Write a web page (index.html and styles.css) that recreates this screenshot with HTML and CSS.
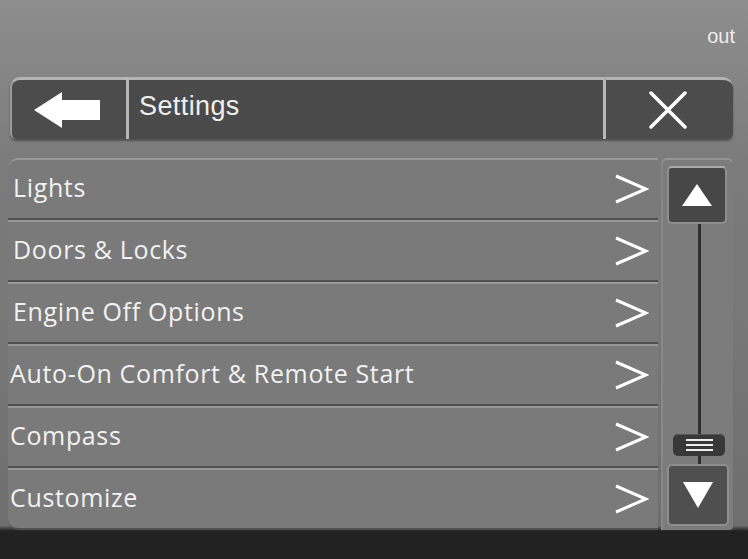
FILE: index.html
```html
<!DOCTYPE html>
<html>
<head>
<meta charset="utf-8">
<link rel="stylesheet" href="styles.css">
</head>
<body>
<div class="screen">
  <div class="status"><span class="out">out</span></div>
  <div class="header">
    <div class="hbtn back">
      <svg width="68" height="36" viewBox="0 0 68 36"><polygon points="0,18 28,0 28,8 66,8 66,28 28,28 28,36" fill="#fff"/></svg>
    </div>
    <div class="title">Settings</div>
    <div class="hbtn close">
      <svg width="38" height="38" viewBox="0 0 38 38"><path d="M2 2 L36 36 M36 2 L2 36" stroke="#fff" stroke-width="3.5" stroke-linecap="round"/></svg>
    </div>
  </div>
  <div class="main">
    <div class="list">
      <div class="row first"><span>Lights</span><svg class="chev" width="36" height="32" viewBox="0 0 36 32"><path d="M3 3 L33 16 L3 29" fill="none" stroke="#fff" stroke-width="3"/></svg></div>
      <div class="row"><span class="in">Doors &amp; Locks</span><svg class="chev" width="36" height="32" viewBox="0 0 36 32"><path d="M3 3 L33 16 L3 29" fill="none" stroke="#fff" stroke-width="3"/></svg></div>
      <div class="row"><span class="in">Engine Off Options</span><svg class="chev" width="36" height="32" viewBox="0 0 36 32"><path d="M3 3 L33 16 L3 29" fill="none" stroke="#fff" stroke-width="3"/></svg></div>
      <div class="row"><span>Auto-On Comfort &amp; Remote Start</span><svg class="chev" width="36" height="32" viewBox="0 0 36 32"><path d="M3 3 L33 16 L3 29" fill="none" stroke="#fff" stroke-width="3"/></svg></div>
      <div class="row"><span>Compass</span><svg class="chev" width="36" height="32" viewBox="0 0 36 32"><path d="M3 3 L33 16 L3 29" fill="none" stroke="#fff" stroke-width="3"/></svg></div>
      <div class="row last"><span>Customize</span><svg class="chev" width="36" height="32" viewBox="0 0 36 32"><path d="M3 3 L33 16 L3 29" fill="none" stroke="#fff" stroke-width="3"/></svg></div>
    </div>
    <div class="scroll">
      <div class="sbtn up"><svg width="30" height="22" viewBox="0 0 30 22"><polygon points="15,0 30,22 0,22" fill="#fff"/></svg></div>
      <div class="track"><div class="line"></div></div>
      <div class="thumb"><i></i><i></i><i></i></div>
      <div class="line short"></div>
      <div class="sbtn down"><svg width="30" height="26" viewBox="0 0 30 26"><polygon points="0,0 30,0 15,26" fill="#fff"/></svg></div>
    </div>
  </div>
  <div class="bottom"></div>
</div>
</body>
</html>
```
FILE: styles.css
```css
html, body { margin: 0; padding: 0; }
body { background: #222; }
.screen {
  width: 748px; height: 559px; overflow: hidden;
  display: flex; flex-direction: column;
  background: linear-gradient(180deg, #8d8d8d 0%, #848484 15%, #7b7b7b 30%, #777 60%, #6e6e6e 94%, #222 95%);
  font-family: "Open Sans", "Liberation Sans", sans-serif;
  color: #f2f2f2;
}
.status { height: 77px; display: flex; justify-content: flex-end; align-items: flex-start; }
.out { font-family: "Liberation Sans", sans-serif; font-size: 20px; color: #eee; margin: 25px 13px 0 0; }
.header { display: flex; height: 62px; margin: 0 15px 0 10px; box-shadow: 0 2px 2px rgba(40,40,40,0.5); border-radius: 10px 10px 6px 6px; }
.hbtn { background: #4c4c4c; display: flex; align-items: center; justify-content: center; border-top: 3px solid #b4b4b4; }
.back { width: 116px; border-left: 2px solid #9a9a9a; border-radius: 10px 0 0 6px; padding-right: 2px; box-sizing: border-box; }
.title {
  flex: 1; background: #4a4a4a; border-top: 3px solid #b4b4b4; border-left: 3px solid #b8b8b8;
  font-family: "Liberation Sans", sans-serif; font-size: 27px; letter-spacing: 0.4px; color: #eee;
  display: flex; align-items: center; padding: 0 0 7px 10px;
}
.close { width: 130px; border-left: 3px solid #b8b8b8; border-radius: 0 10px 6px 0; box-sizing: border-box; padding-right: 4px; }
.main { display: flex; height: 372px; margin: 19px 15px 0 8px; }
.list { width: 650px; display: flex; flex-direction: column; }
.row {
  height: 62px; box-sizing: border-box; background: #7a7a7a;
  border-top: 2px solid #989898; border-bottom: 2px solid #505050;
  display: flex; align-items: center; justify-content: space-between;
  padding: 0 9px 5px 2px; font-size: 25px; letter-spacing: 0.65px;
}
.row .in { padding-left: 3px; }
.row.first { border-radius: 10px 0 0 0; padding-left: 5px; }
.row.last { border-radius: 0 0 0 10px; }
.row .chev { margin-top: 5px; }
.scroll {
  flex: 1; margin-left: 3px; background: #7c7c7c; border-top: 2px solid #959595;
  border-radius: 6px 6px 4px 0; display: flex; flex-direction: column; align-items: center;
  padding: 6px 0 4px 0; box-shadow: inset 2px 0 0 #888;
}
.sbtn { width: 60px; height: 58px; box-sizing: border-box; background: #474747; border: 2px solid #8e8e8e; border-radius: 5px; display: flex; align-items: center; justify-content: center; }
.up { border-top-color: #aaa; }
.down { width: 62px; height: 62px; background: #4f4f4f; margin-left: 2px; }
.track { flex: 1; display: flex; justify-content: center; padding-left: 4px; }
.line { width: 3px; background: #2e2e2e; }
.line.short { height: 8px; margin-left: 4px; }
.thumb { width: 52px; height: 22px; background: #383838; border-radius: 5px; display: flex; flex-direction: column; align-items: center; justify-content: center; gap: 3px; margin-left: 4px; box-shadow: inset 0 1px 0 #555; }
.thumb i { display: block; width: 27px; height: 2px; background: #eee; }
.bottom { flex: 1; }
```
